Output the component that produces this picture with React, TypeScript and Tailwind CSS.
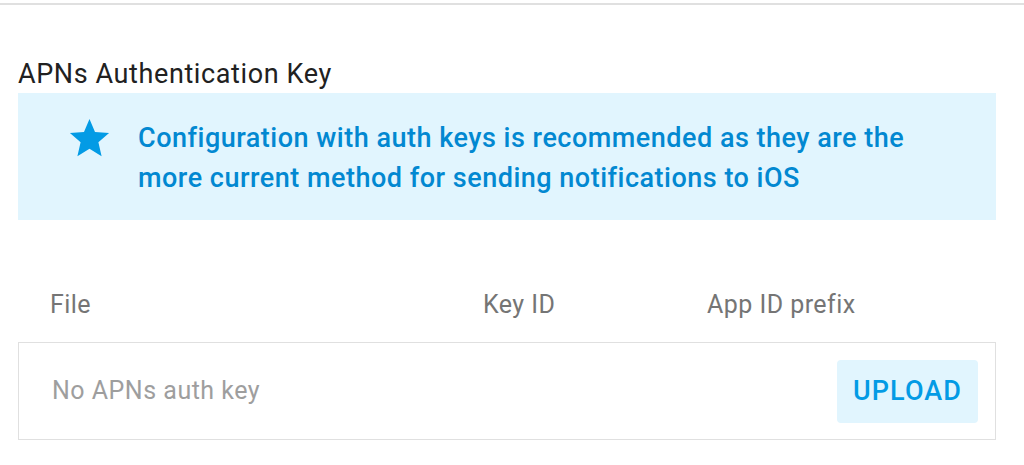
export default function App() {
  return (
    <div className="w-[1024px] h-[465px] bg-white overflow-hidden font-['Roboto',sans-serif]">
      <div className="pt-[3px]">
        <div className="h-[2px] bg-[#e0e0e0]" />
      </div>

      <div className="pl-[18px] pr-[28px]">
        <h2 className="mt-[53px] text-[27px] leading-[32px] tracking-[0.6px] text-[#212121] font-normal">
          APNs Authentication Key
        </h2>

        {/* Recommendation banner */}
        <div className="mt-[3px] h-[127px] bg-[#e1f5fe] flex items-start pl-[48px]">
          <svg viewBox="0 0 24 24" className="w-[47px] h-[47px] mt-[22px] fill-[#039be5] shrink-0">
            <path d="M12 17.27L18.18 21l-1.64-7.03L22 9.24l-7.19-.61L12 2 9.19 8.63 2 9.24l5.46 4.73L5.82 21z" />
          </svg>
          <p className="ml-[25px] mt-[25px] text-[27px] leading-[40px] tracking-[0.5px] font-medium text-[#0288d1]">
            Configuration with auth keys is recommended as they are the
            <br />
            more current method for sending notifications to iOS
          </p>
        </div>

        {/* Table header */}
        <div className="mt-[69px] flex pl-[32px] text-[25px] leading-[32px] tracking-[0.45px] text-[#757575]">
          <div className="w-[433px]">File</div>
          <div className="w-[224px]">Key ID</div>
          <div>App ID prefix</div>
        </div>

        {/* Row */}
        <div className="mt-[21px] h-[98px] border border-[#e0e0e0] flex items-center justify-between pl-[33px] pr-[17px]">
          <span className="text-[25px] tracking-[0.5px] text-[#9e9e9e]">No APNs auth key</span>
          <button className="w-[141px] h-[63px] rounded-[4px] bg-[#e1f5fe] text-[27px] tracking-[1.1px] font-medium text-[#039be5]">
            UPLOAD
          </button>
        </div>
      </div>
    </div>
  );
}
